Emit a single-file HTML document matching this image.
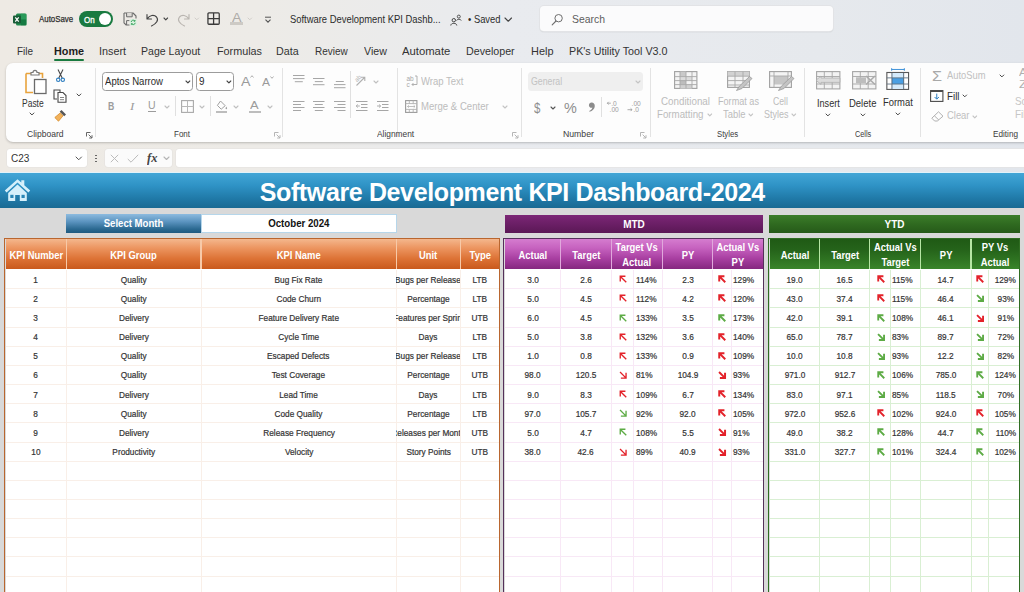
<!DOCTYPE html>
<html lang="en"><head><meta charset="utf-8"><title>Software Development KPI Dashboard</title>
<style>
html,body{margin:0;padding:0}
body{width:1024px;height:592px;overflow:hidden;position:relative;background:linear-gradient(90deg,#eeeae4 0%,#edebe7 25%,#e9ebef 50%,#e6e9ed 80%,#e2e6ec 100%);font-family:"Liberation Sans",sans-serif;}
.b{position:absolute;display:block;overflow:visible}
.t{position:absolute;white-space:nowrap;line-height:1;transform-origin:0 50%;display:block}
.h{display:block;text-align:center;color:#fff;font-weight:bold;white-space:nowrap}
.c{position:absolute;height:19.15px;line-height:20px;font-size:8.8px;color:#333;-webkit-text-stroke:0.2px #333;white-space:nowrap;display:flex;justify-content:center}
.c span{display:block;flex:none;transform:scaleX(0.94)}
.hs{transform:scaleX(0.94)}
.ttl{color:#fff;font-weight:bold;font-size:25px;text-align:center;white-space:nowrap;letter-spacing:-0.37px}
</style></head><body>
<div id="app">
<svg class="b" style="left:12.5px;top:12.5px;" width="14" height="13" viewBox="0 0 14 13"><rect x="3" y="0.5" width="10.5" height="12" rx="1.5" fill="#1e8a4c"/><rect x="8" y="0.8" width="5.3" height="5.8" fill="#2a9a5a"/><rect x="8" y="6.6" width="5.3" height="5.6" fill="#157a42"/><rect x="0" y="2.5" width="8" height="8" rx="1" fill="#185c37"/><path d="M2.3 4.3 L5.7 8.7 M5.7 4.3 L2.3 8.7" stroke="#fff" stroke-width="1.2"/></svg>
<span class="t" style="left:39.2px;top:15.4px;font-size:9.2px;color:#2e2e2e;transform:scaleX(0.857);-webkit-text-stroke:0.25px #2e2e2e;">AutoSave</span>
<div class="b" style="left:78.7px;top:11.4px;width:34.3px;height:16.0px;background:#197a40;border-radius:8px;"></div>
<span class="t" style="left:84.3px;top:15.5px;font-size:9px;color:#fff;transform:scaleX(0.891);-webkit-text-stroke:0.3px #fff;">On</span>
<div class="b" style="left:98.6px;top:13.4px;width:12.0px;height:12.0px;background:#fff;border-radius:6px;"></div>
<svg class="b" style="left:123.2px;top:12.0px;" width="14" height="14" viewBox="0 0 14 14"><path d="M1 1 H10 L13 4 V6.5 M6.5 13 H3.2 L1 10.8 V1" fill="none" stroke="#6b6b6b" stroke-width="1.1" stroke-linejoin="round"/><path d="M3.6 1 V4.8 H9.2 V1" fill="#dcdad6" stroke="#6b6b6b" stroke-width="1"/><path d="M3.6 13 V8.6 H6.5" fill="none" stroke="#6b6b6b" stroke-width="1"/><rect x="6.8" y="7" width="6.8" height="6.8" rx="1.2" fill="#d9f0df"/><path d="M8.2 10 a2 2 0 0 1 3.6 -1 M12 8 V9.2 H10.8 M12.2 10.8 a2 2 0 0 1 -3.6 1 M8.4 12.8 V11.6 H9.6" fill="none" stroke="#2e9e55" stroke-width="0.9"/></svg>
<svg class="b" style="left:145.0px;top:12.0px;" width="15" height="15" viewBox="0 0 15 15"><path d="M2 2.5 V7 H6.5 M2.3 6.7 C4.5 3.2 9 2.2 11.5 5 C14 8 11.5 11.5 6.5 14" fill="none" stroke="#444" stroke-width="1.15" stroke-linecap="round" stroke-linejoin="round"/></svg>
<svg class="b" style="left:163.4px;top:16.7px;" width="5.6" height="3.8" viewBox="0 0 5.6 3.8"><path d="M1 1 L2.8 2.8 L4.6 1" fill="none" stroke="#444" stroke-width="1.1" stroke-linecap="round" stroke-linejoin="round"/></svg>
<svg class="b" style="left:176.0px;top:12.0px;" width="15" height="15" viewBox="0 0 15 15"><path d="M13 2.5 V7 H8.5 M12.7 6.7 C10.5 3.2 6 2.2 3.5 5 C1 8 3.5 11.5 8.5 14" fill="none" stroke="#b9b5b0" stroke-width="1.15" stroke-linecap="round" stroke-linejoin="round"/></svg>
<svg class="b" style="left:194.2px;top:16.7px;" width="5.6" height="3.8" viewBox="0 0 5.6 3.8"><path d="M1 1 L2.8 2.8 L4.6 1" fill="none" stroke="#cfccc8" stroke-width="1" stroke-linecap="round" stroke-linejoin="round"/></svg>
<svg class="b" style="left:207.0px;top:12.4px;" width="13.2" height="13.2" viewBox="0 0 14 14"><rect x="1" y="1" width="12" height="12" rx="1" fill="none" stroke="#3a3a3a" stroke-width="1.35"/><path d="M7 1 V13 M1 7 H13" stroke="#3a3a3a" stroke-width="1.35"/></svg>
<span class="t" style="left:231.8px;top:11.5px;font-size:12.3px;color:#aeaba7;transform:scaleX(1.158);">A</span>
<div class="b" style="left:230.2px;top:22.0px;width:12.4px;height:2.7px;background:#cdcac5;"></div>
<svg class="b" style="left:247.2px;top:16.7px;" width="5.6" height="3.8" viewBox="0 0 5.6 3.8"><path d="M1 1 L2.8 2.8 L4.6 1" fill="none" stroke="#d0cdc9" stroke-width="1" stroke-linecap="round" stroke-linejoin="round"/></svg>
<svg class="b" style="left:264.0px;top:15.5px;" width="8" height="8" viewBox="0 0 8 8"><path d="M1 1.2 H7" stroke="#555" stroke-width="1"/><path d="M1.5 3.6 L4 6.2 L6.5 3.6" fill="none" stroke="#555" stroke-width="1.1"/></svg>
<span class="t" style="left:289.5px;top:15.1px;font-size:10.3px;color:#2b2b2b;transform:scaleX(0.913);">Software Development KPI Dashb...</span>
<svg class="b" style="left:450.0px;top:13.5px;" width="12" height="12" viewBox="0 0 12 12"><circle cx="3.8" cy="6.2" r="1.7" fill="none" stroke="#444" stroke-width="1"/><path d="M0.8 11.5 C0.8 8.6 6.8 8.6 6.8 11.5" fill="none" stroke="#444" stroke-width="1"/><circle cx="8.8" cy="2.6" r="1.5" fill="none" stroke="#444" stroke-width="0.9"/><path d="M6.6 6.6 C6.8 4.8 11 4.8 11.2 6.6" fill="none" stroke="#444" stroke-width="0.9"/></svg>
<span class="t" style="left:468.0px;top:15.1px;font-size:10.3px;color:#2b2b2b;transform:scaleX(0.911);">• Saved</span>
<svg class="b" style="left:504.4px;top:17.4px;" width="8.5" height="5.25" viewBox="0 0 8.5 5.25"><path d="M1 1 L4.25 4.25 L7.5 1" fill="none" stroke="#444" stroke-width="1.1" stroke-linecap="round" stroke-linejoin="round"/></svg>
<div class="b" style="left:539.5px;top:6.0px;width:293.5px;height:25.0px;background:#fbfbfc;border-radius:4px;box-shadow:0 0 0 1px #e2e3e6, 0 1px 1.5px rgba(0,0,0,.14);"></div>
<svg class="b" style="left:550.5px;top:12.5px;" width="13" height="13" viewBox="0 0 13 13"><circle cx="7.6" cy="5.2" r="3.7" fill="none" stroke="#6e6e6e" stroke-width="1"/><path d="M5 8 L1.2 11.8" stroke="#6e6e6e" stroke-width="1.1" stroke-linecap="round"/></svg>
<span class="t" style="left:572.0px;top:14.2px;font-size:11px;color:#5e5e5e;transform:scaleX(0.947);">Search</span>
<span class="t" style="left:17.0px;top:46.3px;font-size:11.3px;color:#333;transform:scaleX(0.879);">File</span>
<span class="t" style="left:54.0px;top:46.0px;font-size:11.5px;color:#1c1c1c;transform:scaleX(0.939);font-weight:bold;">Home</span>
<span class="t" style="left:98.5px;top:46.3px;font-size:11.3px;color:#333;transform:scaleX(0.959);">Insert</span>
<span class="t" style="left:141.3px;top:46.3px;font-size:11.3px;color:#333;transform:scaleX(0.933);">Page Layout</span>
<span class="t" style="left:216.5px;top:46.3px;font-size:11.3px;color:#333;transform:scaleX(0.956);">Formulas</span>
<span class="t" style="left:276.4px;top:46.3px;font-size:11.3px;color:#333;transform:scaleX(0.947);">Data</span>
<span class="t" style="left:315.0px;top:46.3px;font-size:11.3px;color:#333;transform:scaleX(0.880);">Review</span>
<span class="t" style="left:364.0px;top:46.3px;font-size:11.3px;color:#333;transform:scaleX(0.939);">View</span>
<span class="t" style="left:402.4px;top:46.3px;font-size:11.3px;color:#333;transform:scaleX(0.999);">Automate</span>
<span class="t" style="left:466.0px;top:46.3px;font-size:11.3px;color:#333;transform:scaleX(0.944);">Developer</span>
<span class="t" style="left:530.5px;top:46.3px;font-size:11.3px;color:#333;transform:scaleX(0.968);">Help</span>
<span class="t" style="left:568.5px;top:46.3px;font-size:11.3px;color:#333;transform:scaleX(0.950);">PK's Utility Tool V3.0</span>
<div class="b" style="left:54.0px;top:59.0px;width:30.0px;height:2.2px;background:#197a40;border-radius:1px;"></div>
<div class="b" style="left:6.3px;top:63.0px;width:1033.7px;height:79.3px;background:#fdfdfd;border-radius:7px;box-shadow:0 1px 2.5px rgba(0,0,0,.22);"></div>
<div class="b" style="left:94.8px;top:68.0px;width:1.0px;height:69.0px;background:#e3e3e3;"></div>
<div class="b" style="left:282.2px;top:68.0px;width:1.0px;height:69.0px;background:#e3e3e3;"></div>
<div class="b" style="left:396.5px;top:68.0px;width:1.0px;height:69.0px;background:#e3e3e3;"></div>
<div class="b" style="left:520.8px;top:68.0px;width:1.0px;height:69.0px;background:#e3e3e3;"></div>
<div class="b" style="left:649.8px;top:68.0px;width:1.0px;height:69.0px;background:#e3e3e3;"></div>
<div class="b" style="left:804.2px;top:68.0px;width:1.0px;height:69.0px;background:#e3e3e3;"></div>
<div class="b" style="left:920.2px;top:68.0px;width:1.0px;height:69.0px;background:#e3e3e3;"></div>
<svg class="b" style="left:22.5px;top:69.0px;" width="25" height="26" viewBox="0 0 25 26"><path d="M3 4.5 H8 M16 4.5 H19.5 V9 M10 23.5 H3 V4.5" fill="none" stroke="#e8a33d" stroke-width="1.6"/><path d="M8 6 V3.5 H10 C10 0.6 14 0.6 14 3.5 H16 V6 Z" fill="#fff" stroke="#7a7a7a" stroke-width="1.2"/><rect x="11.5" y="10.5" width="11.5" height="14" fill="#fff" stroke="#6a6a6a" stroke-width="1.3"/></svg>
<span class="t" style="left:21.6px;top:98.0px;font-size:10.5px;color:#333;transform:scaleX(0.808);">Paste</span>
<svg class="b" style="left:29.1px;top:112.2px;" width="5.9" height="3.95" viewBox="0 0 5.9 3.95"><path d="M1 1 L2.95 2.95 L4.9 1" fill="none" stroke="#444" stroke-width="1.0" stroke-linecap="round" stroke-linejoin="round"/></svg>
<svg class="b" style="left:55.5px;top:68.5px;" width="9" height="13.5" viewBox="0 0 9 13.5"><path d="M2 0.5 L6.2 9 M7 0.5 L2.8 9" stroke="#4a4a4a" stroke-width="1.1"/><circle cx="2.2" cy="10.8" r="1.7" fill="none" stroke="#2f7fc1" stroke-width="1.1"/><circle cx="6.8" cy="10.8" r="1.7" fill="none" stroke="#2f7fc1" stroke-width="1.1"/></svg>
<svg class="b" style="left:53.0px;top:88.5px;" width="14" height="14" viewBox="0 0 14 14"><path d="M4 10 H1 V1 H7 V3" fill="none" stroke="#484848" stroke-width="1.1"/><path d="M5 3.5 H10 L13 6.5 V13.2 H5 Z" fill="#fff" stroke="#484848" stroke-width="1.1"/><path d="M7 8.5 H11 M7 10.7 H11" stroke="#777" stroke-width="0.9"/></svg>
<svg class="b" style="left:75.8px;top:93.0px;" width="5.9" height="3.95" viewBox="0 0 5.9 3.95"><path d="M1 1 L2.95 2.95 L4.9 1" fill="none" stroke="#444" stroke-width="1.0" stroke-linecap="round" stroke-linejoin="round"/></svg>
<svg class="b" style="left:54.0px;top:108.5px;" width="13" height="13" viewBox="0 0 13 13"><path d="M7.5 1 L12 5.5 L10.2 7.3 L5.7 2.8 Z" fill="#555"/><path d="M6.2 4 L9 6.8 L4.5 12.2 L0.8 8.5 Z" fill="#f2b25c" stroke="#d48a2a" stroke-width="0.8"/></svg>
<span class="t" style="left:27.0px;top:130.0px;font-size:9.2px;color:#3b3b3b;transform:scaleX(0.927);">Clipboard</span>
<svg class="b" style="left:85.7px;top:131.5px;" width="7" height="7" viewBox="0 0 7 7"><path d="M0.5 4.5 V0.5 H4.5" fill="none" stroke="#666" stroke-width="1"/><path d="M2.6 2.6 L6 6 M6 3.2 V6 H3.2" fill="none" stroke="#666" stroke-width="1"/></svg>
<div class="b" style="left:102.3px;top:72.0px;width:91.1px;height:18.6px;background:#fff;border:1px solid #9c9c9c;border-radius:3.5px;box-sizing:border-box;"></div>
<span class="t" style="left:105.0px;top:76.9px;font-size:10.3px;color:#2b2b2b;transform:scaleX(0.930);">Aptos Narrow</span>
<svg class="b" style="left:185.3px;top:79.5px;" width="5.8" height="3.9" viewBox="0 0 5.8 3.9"><path d="M1 1 L2.9 2.9 L4.8 1" fill="none" stroke="#444" stroke-width="1.1" stroke-linecap="round" stroke-linejoin="round"/></svg>
<div class="b" style="left:196.0px;top:72.0px;width:38.3px;height:18.6px;background:#fff;border:1px solid #9c9c9c;border-radius:3.5px;box-sizing:border-box;"></div>
<span class="t" style="left:198.5px;top:76.9px;font-size:10.3px;color:#2b2b2b;transform:scaleX(0.960);">9</span>
<svg class="b" style="left:226.4px;top:79.5px;" width="5.8" height="3.9" viewBox="0 0 5.8 3.9"><path d="M1 1 L2.9 2.9 L4.8 1" fill="none" stroke="#444" stroke-width="1.1" stroke-linecap="round" stroke-linejoin="round"/></svg>
<span class="t" style="left:240.5px;top:74.9px;font-size:13.5px;color:#9a9a9a;transform:scaleX(1.055);">A</span>
<svg class="b" style="left:249.5px;top:75.0px;" width="4" height="3" viewBox="0 0 4 3"><path d="M0.5 2.5 L2 0.7 L3.5 2.5" fill="none" stroke="#9a9a9a" stroke-width="0.8"/></svg>
<span class="t" style="left:262.0px;top:76.5px;font-size:11.5px;color:#9a9a9a;transform:scaleX(1.043);">A</span>
<svg class="b" style="left:269.5px;top:75.5px;" width="4" height="3" viewBox="0 0 4 3"><path d="M0.5 0.5 L2 2.3 L3.5 0.5" fill="none" stroke="#9a9a9a" stroke-width="0.8"/></svg>
<span class="t" style="left:108.4px;top:102.0px;font-size:10px;color:#9c9c9c;transform:scaleX(0.872);font-weight:bold;">B</span>
<span class="t" style="left:129.8px;top:102.0px;font-size:10px;color:#9c9c9c;transform:scaleX(1.296);font-style:italic;font-family:'Liberation Serif',serif;">I</span>
<span class="t" style="left:148.0px;top:101.4px;font-size:10px;color:#9c9c9c;transform:scaleX(1.052);">U</span>
<div class="b" style="left:148.0px;top:111.4px;width:7.6px;height:1.0px;background:#9c9c9c;"></div>
<svg class="b" style="left:164.0px;top:104.8px;" width="6" height="4.0" viewBox="0 0 6 4.0"><path d="M1 1 L3.0 3.0 L5 1" fill="none" stroke="#c0c0c0" stroke-width="1.1" stroke-linecap="round" stroke-linejoin="round"/></svg>
<div class="b" style="left:175.1px;top:96.0px;width:1.0px;height:20.0px;background:#e0e0e0;"></div>
<svg class="b" style="left:180.5px;top:100.3px;" width="13" height="13" viewBox="0 0 13 13"><rect x="0.6" y="0.6" width="11.8" height="11.8" fill="none" stroke="#a8a8a8" stroke-width="1.1"/><path d="M6.5 0.6 V12.4 M0.6 6.5 H12.4" stroke="#b8b8b8" stroke-width="1"/></svg>
<svg class="b" style="left:198.8px;top:104.8px;" width="6" height="4.0" viewBox="0 0 6 4.0"><path d="M1 1 L3.0 3.0 L5 1" fill="none" stroke="#c0c0c0" stroke-width="1.1" stroke-linecap="round" stroke-linejoin="round"/></svg>
<div class="b" style="left:209.5px;top:96.0px;width:1.0px;height:20.0px;background:#e0e0e0;"></div>
<svg class="b" style="left:215.5px;top:99.5px;" width="12" height="11" viewBox="0 0 12 11"><path d="M4.5 1 L9.2 5.7 L5.2 9.2 L1.4 5.4 Z" fill="none" stroke="#a0a0a0" stroke-width="1"/><path d="M10.3 6.5 C11.5 8.2 11.3 9.3 10.3 9.3 C9.3 9.3 9.2 8.2 10.3 6.5Z" fill="#a0a0a0"/></svg>
<div class="b" style="left:215.5px;top:110.8px;width:11.8px;height:2.0px;background:#bdbdbd;"></div>
<svg class="b" style="left:233.0px;top:104.8px;" width="6" height="4.0" viewBox="0 0 6 4.0"><path d="M1 1 L3.0 3.0 L5 1" fill="none" stroke="#c0c0c0" stroke-width="1.1" stroke-linecap="round" stroke-linejoin="round"/></svg>
<span class="t" style="left:250.2px;top:100.3px;font-size:11px;color:#9c9c9c;transform:scaleX(1.172);">A</span>
<div class="b" style="left:248.5px;top:110.8px;width:12.3px;height:2.0px;background:#bdbdbd;"></div>
<svg class="b" style="left:266.5px;top:104.8px;" width="6" height="4.0" viewBox="0 0 6 4.0"><path d="M1 1 L3.0 3.0 L5 1" fill="none" stroke="#c0c0c0" stroke-width="1.1" stroke-linecap="round" stroke-linejoin="round"/></svg>
<span class="t" style="left:174.0px;top:130.0px;font-size:9.2px;color:#3b3b3b;transform:scaleX(0.869);">Font</span>
<svg class="b" style="left:273.5px;top:131.5px;" width="7" height="7" viewBox="0 0 7 7"><path d="M0.5 4.5 V0.5 H4.5" fill="none" stroke="#b5b5b5" stroke-width="1"/><path d="M2.6 2.6 L6 6 M6 3.2 V6 H3.2" fill="none" stroke="#b5b5b5" stroke-width="1"/></svg>
<svg class="b" style="left:292.5px;top:74.5px;" width="11.5" height="9.3" viewBox="0 0 11.5 9.3"><rect x="0.0" y="0.0" width="11.5" height="1" fill="#a6a6a6"/><rect x="0.0" y="3.1" width="11.5" height="1" fill="#a6a6a6"/><rect x="1.8" y="6.2" width="8" height="1" fill="#a6a6a6"/></svg>
<svg class="b" style="left:313.0px;top:77.5px;" width="11.5" height="9.3" viewBox="0 0 11.5 9.3"><rect x="0.0" y="0.0" width="11.5" height="1" fill="#a6a6a6"/><rect x="1.8" y="3.1" width="8" height="1" fill="#a6a6a6"/><rect x="0.0" y="6.2" width="11.5" height="1" fill="#a6a6a6"/></svg>
<svg class="b" style="left:333.5px;top:80.5px;" width="11.5" height="9.3" viewBox="0 0 11.5 9.3"><rect x="1.8" y="0.0" width="8" height="1" fill="#a6a6a6"/><rect x="0.0" y="3.1" width="11.5" height="1" fill="#a6a6a6"/><rect x="0.0" y="6.2" width="11.5" height="1" fill="#a6a6a6"/></svg>
<div class="b" style="left:350.2px;top:71.0px;width:1.0px;height:47.0px;background:#e0e0e0;"></div>
<svg class="b" style="left:355.0px;top:74.0px;" width="13" height="13" viewBox="0 0 13 13"><path d="M1.5 11.5 L9.5 3.5 M9.8 7 V3.2 H6" fill="none" stroke="#b0b0b0" stroke-width="1.1"/><text x="0" y="6.5" font-size="6" fill="#b0b0b0" font-family="Liberation Sans, sans-serif" transform="rotate(-45 3 5)">ab</text></svg>
<svg class="b" style="left:372.6px;top:79.5px;" width="6" height="4.0" viewBox="0 0 6 4.0"><path d="M1 1 L3.0 3.0 L5 1" fill="none" stroke="#c0c0c0" stroke-width="1.1" stroke-linecap="round" stroke-linejoin="round"/></svg>
<svg class="b" style="left:292.5px;top:101.0px;" width="11.5" height="12.0" viewBox="0 0 11.5 12.0"><rect x="0.0" y="0.0" width="11.5" height="1" fill="#a6a6a6"/><rect x="0.0" y="3.0" width="8" height="1" fill="#a6a6a6"/><rect x="0.0" y="6.0" width="11.5" height="1" fill="#a6a6a6"/><rect x="0.0" y="9.0" width="8" height="1" fill="#a6a6a6"/></svg>
<svg class="b" style="left:313.0px;top:101.0px;" width="11.5" height="12.0" viewBox="0 0 11.5 12.0"><rect x="0.0" y="0.0" width="11.5" height="1" fill="#a6a6a6"/><rect x="1.8" y="3.0" width="8" height="1" fill="#a6a6a6"/><rect x="0.0" y="6.0" width="11.5" height="1" fill="#a6a6a6"/><rect x="1.8" y="9.0" width="8" height="1" fill="#a6a6a6"/></svg>
<svg class="b" style="left:333.5px;top:101.0px;" width="11.5" height="12.0" viewBox="0 0 11.5 12.0"><rect x="0.0" y="0.0" width="11.5" height="1" fill="#a6a6a6"/><rect x="3.5" y="3.0" width="8" height="1" fill="#a6a6a6"/><rect x="0.0" y="6.0" width="11.5" height="1" fill="#a6a6a6"/><rect x="3.5" y="9.0" width="8" height="1" fill="#a6a6a6"/></svg>
<svg class="b" style="left:356.0px;top:101.0px;" width="11.5" height="10" viewBox="0 0 11.5 10"><rect x="0" y="0" width="11.5" height="1" fill="#a6a6a6"/><rect x="5" y="3" width="6.5" height="1" fill="#a6a6a6"/><rect x="5" y="6" width="6.5" height="1" fill="#a6a6a6"/><rect x="0" y="9" width="11.5" height="1" fill="#a6a6a6"/><path d="M0.3 5 H3.8 M1.8 3.5 L0.2 5 L1.8 6.5" fill="none" stroke="#a6a6a6" stroke-width="0.9"/></svg>
<svg class="b" style="left:376.6px;top:101.0px;" width="11.5" height="10" viewBox="0 0 11.5 10"><rect x="0" y="0" width="11.5" height="1" fill="#a6a6a6"/><rect x="5" y="3" width="6.5" height="1" fill="#a6a6a6"/><rect x="5" y="6" width="6.5" height="1" fill="#a6a6a6"/><rect x="0" y="9" width="11.5" height="1" fill="#a6a6a6"/><path d="M0 5 H3.5 M2 3.5 L3.7 5 L2 6.5" fill="none" stroke="#a6a6a6" stroke-width="0.9"/></svg>
<svg class="b" style="left:406.0px;top:74.5px;" width="12" height="13" viewBox="0 0 12 13"><text x="0.5" y="5.5" font-size="6.5" fill="#a8a8a8" font-family="Liberation Sans, sans-serif">ab</text><text x="0.5" y="12" font-size="6.5" fill="#a8a8a8" font-family="Liberation Sans, sans-serif">c</text><path d="M9 1 H11 V9.5 H6 M7.5 8 L6 9.5 L7.5 11" fill="none" stroke="#a8a8a8" stroke-width="0.9"/></svg>
<span class="t" style="left:421.0px;top:77.3px;font-size:10.3px;color:#bcbcbc;transform:scaleX(0.924);">Wrap Text</span>
<svg class="b" style="left:405.0px;top:100.0px;" width="12.5" height="13" viewBox="0 0 12.5 13"><rect x="0.6" y="0.6" width="11.3" height="11.8" fill="none" stroke="#9a9a9a" stroke-width="1.1"/><path d="M0.6 3.6 H11.9 M0.6 9.4 H11.9 M4.3 0.6 V3.6 M8.2 0.6 V3.6 M4.3 9.4 V12.4 M8.2 9.4 V12.4" stroke="#b0b0b0" stroke-width="0.9"/><path d="M2.5 6.5 H10 M3.8 5.3 L2.5 6.5 L3.8 7.7 M8.7 5.3 L10 6.5 L8.7 7.7" fill="none" stroke="#b0b0b0" stroke-width="0.8"/></svg>
<span class="t" style="left:421.0px;top:102.3px;font-size:10.3px;color:#bcbcbc;transform:scaleX(0.931);">Merge &amp; Center</span>
<svg class="b" style="left:501.8px;top:105.0px;" width="6" height="4.0" viewBox="0 0 6 4.0"><path d="M1 1 L3.0 3.0 L5 1" fill="none" stroke="#c4c4c4" stroke-width="1.1" stroke-linecap="round" stroke-linejoin="round"/></svg>
<span class="t" style="left:376.5px;top:130.0px;font-size:9.2px;color:#3b3b3b;transform:scaleX(0.909);">Alignment</span>
<svg class="b" style="left:512.0px;top:131.5px;" width="7" height="7" viewBox="0 0 7 7"><path d="M0.5 4.5 V0.5 H4.5" fill="none" stroke="#b5b5b5" stroke-width="1"/><path d="M2.6 2.6 L6 6 M6 3.2 V6 H3.2" fill="none" stroke="#b5b5b5" stroke-width="1"/></svg>
<div class="b" style="left:528.0px;top:72.3px;width:115.3px;height:18.5px;background:#efefef;border-radius:3.5px;"></div>
<span class="t" style="left:530.5px;top:76.9px;font-size:10.3px;color:#c2c2c2;transform:scaleX(0.851);">General</span>
<svg class="b" style="left:635.0px;top:79.5px;" width="6" height="4.0" viewBox="0 0 6 4.0"><path d="M1 1 L3.0 3.0 L5 1" fill="none" stroke="#c4c4c4" stroke-width="1.1" stroke-linecap="round" stroke-linejoin="round"/></svg>
<span class="t" style="left:534.2px;top:100.0px;font-size:15px;color:#8e8e8e;transform:scaleX(0.767);">$</span>
<svg class="b" style="left:550.0px;top:105.5px;" width="6" height="4.0" viewBox="0 0 6 4.0"><path d="M1 1 L3.0 3.0 L5 1" fill="none" stroke="#555" stroke-width="1.1" stroke-linecap="round" stroke-linejoin="round"/></svg>
<span class="t" style="left:564.0px;top:100.5px;font-size:14px;color:#8e8e8e;transform:scaleX(1.028);">%</span>
<svg class="b" style="left:587.5px;top:102.0px;" width="8" height="11" viewBox="0 0 8 11"><path d="M3.6 0.4 C5.6 0.4 6.8 1.8 6.8 3.9 C6.8 6.6 4.6 8.8 1.6 9.8 L1.2 9 C3 8.2 4.2 7 4.4 5.6 C4.2 5.7 3.9 5.8 3.5 5.8 C2 5.8 0.9 4.7 0.9 3.2 C0.9 1.6 2.1 0.4 3.6 0.4 Z" fill="#8c8c8c"/></svg>
<div class="b" style="left:601.2px;top:97.0px;width:1.0px;height:20.0px;background:#e0e0e0;"></div>
<svg class="b" style="left:606.7px;top:100.3px;" width="15" height="13" viewBox="0 0 15 13"><text x="6" y="5.6" font-family="Liberation Sans, sans-serif" font-size="6.6" fill="#9c9c9c">0</text><text x="4.3" y="5.6" font-family="Liberation Sans, sans-serif" font-size="6.6" fill="#9c9c9c">.</text><text x="2.6" y="12" font-family="Liberation Sans, sans-serif" font-size="6.6" fill="#9c9c9c">.00</text><path d="M0.3 3.2 H3.8 M1.7 1.8 L0.3 3.2 L1.7 4.6" fill="none" stroke="#9c9c9c" stroke-width="0.85"/></svg>
<svg class="b" style="left:626.6px;top:100.3px;" width="15" height="13" viewBox="0 0 15 13"><text x="4.6" y="5.6" font-family="Liberation Sans, sans-serif" font-size="6.6" fill="#9c9c9c">.00</text><text x="6.4" y="12" font-family="Liberation Sans, sans-serif" font-size="6.6" fill="#9c9c9c">.0</text><path d="M0.5 9.7 H5 M3.6 8.3 L5 9.7 L3.6 11.1" fill="none" stroke="#9c9c9c" stroke-width="0.85"/></svg>
<span class="t" style="left:563.0px;top:130.0px;font-size:9.2px;color:#3b3b3b;transform:scaleX(0.947);">Number</span>
<svg class="b" style="left:640.0px;top:131.5px;" width="7" height="7" viewBox="0 0 7 7"><path d="M0.5 4.5 V0.5 H4.5" fill="none" stroke="#b5b5b5" stroke-width="1"/><path d="M2.6 2.6 L6 6 M6 3.2 V6 H3.2" fill="none" stroke="#b5b5b5" stroke-width="1"/></svg>
<svg class="b" style="left:674.0px;top:71.0px;" width="26.5" height="21" viewBox="0 0 26.5 21"><rect x="0.6" y="0.6" width="22.3" height="16.8" fill="#f4f4f4" stroke="#a0a0a0" stroke-width="1.1"/><rect x="6" y="0.6" width="6" height="5" fill="#c9c9c9"/><rect x="6" y="5.6" width="12" height="4" fill="#dcdcdc"/><rect x="6" y="9.6" width="6" height="4" fill="#bdbdbd"/><rect x="6" y="13.6" width="12" height="4" fill="#d0d0d0"/><path d="M6 0.6 V17.4 M12 0.6 V17.4 M18 0.6 V17.4 M0.6 5.6 H22.9 M0.6 9.6 H22.9 M0.6 13.6 H22.9" stroke="#a8a8a8" stroke-width="0.9" fill="none"/></svg>
<svg class="b" style="left:727.0px;top:71.0px;" width="26" height="20" viewBox="0 0 26 20"><rect x="0.6" y="0.6" width="21.8" height="15.8" fill="#f4f4f4" stroke="#a0a0a0" stroke-width="1.1"/><rect x="0.6" y="0.6" width="21.8" height="4.5" fill="#d2d2d2"/><path d="M8 0.6 V16.4 M16 0.6 V16.4 M0.6 5.2 H22.4 M0.6 9.6 H22.4 M0.6 14 H22.4" stroke="#a8a8a8" stroke-width="0.9" fill="none"/><path d="M22.5 5.5 L25 7.5 L15 17.5 L9.5 19.5 L12.5 15 Z" fill="#c4c4c4" stroke="#9a9a9a" stroke-width="0.8"/></svg>
<svg class="b" style="left:769.0px;top:71.0px;" width="26" height="20" viewBox="0 0 26 20"><rect x="0.6" y="0.6" width="21.8" height="15.8" fill="#f4f4f4" stroke="#a0a0a0" stroke-width="1.1"/><rect x="5" y="5" width="14" height="8.5" fill="#c6c6c6"/><path d="M0.6 5 H22.4 M5 0.6 V16.4 M19 0.6 V13" stroke="#a8a8a8" stroke-width="0.9" fill="none"/><path d="M22.5 5.5 L25 7.5 L15 17.5 L9.5 19.5 L12.5 15 Z" fill="#c4c4c4" stroke="#9a9a9a" stroke-width="0.8"/></svg>
<span class="t" style="left:661.0px;top:96.9px;font-size:10.3px;color:#bcbcbc;transform:scaleX(0.951);">Conditional</span>
<span class="t" style="left:657.0px;top:109.5px;font-size:10.3px;color:#bcbcbc;transform:scaleX(0.945);">Formatting</span>
<svg class="b" style="left:706.7px;top:112.7px;" width="5.6" height="3.8" viewBox="0 0 5.6 3.8"><path d="M1 1 L2.8 2.8 L4.6 1" fill="none" stroke="#c4c4c4" stroke-width="1.1" stroke-linecap="round" stroke-linejoin="round"/></svg>
<span class="t" style="left:718.0px;top:96.9px;font-size:10.3px;color:#bcbcbc;transform:scaleX(0.884);">Format as</span>
<span class="t" style="left:723.0px;top:109.5px;font-size:10.3px;color:#bcbcbc;transform:scaleX(0.914);">Table</span>
<svg class="b" style="left:748.2px;top:112.7px;" width="5.6" height="3.8" viewBox="0 0 5.6 3.8"><path d="M1 1 L2.8 2.8 L4.6 1" fill="none" stroke="#c4c4c4" stroke-width="1.1" stroke-linecap="round" stroke-linejoin="round"/></svg>
<span class="t" style="left:773.0px;top:96.9px;font-size:10.3px;color:#bcbcbc;transform:scaleX(0.845);">Cell</span>
<span class="t" style="left:764.0px;top:109.5px;font-size:10.3px;color:#bcbcbc;transform:scaleX(0.873);">Styles</span>
<svg class="b" style="left:790.7px;top:112.7px;" width="5.6" height="3.8" viewBox="0 0 5.6 3.8"><path d="M1 1 L2.8 2.8 L4.6 1" fill="none" stroke="#c4c4c4" stroke-width="1.1" stroke-linecap="round" stroke-linejoin="round"/></svg>
<span class="t" style="left:716.6px;top:130.0px;font-size:9.2px;color:#3b3b3b;transform:scaleX(0.842);">Styles</span>
<svg class="b" style="left:816.3px;top:71.3px;" width="24.5" height="18.5" viewBox="0 0 24.5 18.5"><rect x="0.6" y="0.6" width="23.3" height="17.3" fill="#f3f3f3" stroke="#a6a6a6" stroke-width="1.1"/><path d="M8.3 0.6 V17.9 M16.2 0.6 V17.9 M0.6 5.5 H23.9 M0.6 13 H23.9" stroke="#a6a6a6" stroke-width="0.9"/><path d="M0 9.2 L5 5 V7 H23.9 V11.4 H5 V13.4 Z" fill="#dcdcdc" stroke="#a8a8a8" stroke-width="0.7"/></svg>
<svg class="b" style="left:851.5px;top:71.3px;" width="24.5" height="18.5" viewBox="0 0 24.5 18.5"><rect x="0.6" y="0.6" width="23.3" height="17.3" fill="#f3f3f3" stroke="#a6a6a6" stroke-width="1.1"/><path d="M8.3 0.6 V17.9 M16.2 0.6 V17.9 M0.6 5.5 H23.9 M0.6 13 H23.9" stroke="#a6a6a6" stroke-width="0.9"/><rect x="4" y="6.3" width="10" height="6" fill="#bdbdbd"/><path d="M14 5 L23 13.5 M23 5 L14 13.5" stroke="#ababab" stroke-width="1.6"/></svg>
<svg class="b" style="left:886.0px;top:68.0px;" width="24" height="22" viewBox="0 -0.5 24 22.5"><path d="M5.5 1 H18.5 M5.5 -0.3 V2.3 M18.5 -0.3 V2.3" stroke="#3a8fd8" stroke-width="1"/><rect x="0.6" y="4.1" width="22.2" height="17.3" fill="#fff" stroke="#5a5a5a" stroke-width="1.15"/><rect x="5.8" y="4.6" width="12" height="16.3" fill="#d4eafb"/><rect x="5.8" y="9.6" width="12" height="6.3" fill="#4a9fe3"/><path d="M5.8 4.1 V21.4 M17.8 4.1 V21.4" stroke="#4f5f6f" stroke-width="0.9"/><path d="M0.6 9.6 H22.8 M0.6 15.9 H22.8" stroke="#5f6f7f" stroke-width="0.9"/></svg>
<span class="t" style="left:817.0px;top:98.2px;font-size:10.5px;color:#2f2f2f;transform:scaleX(0.868);">Insert</span>
<svg class="b" style="left:825.4px;top:112.8px;" width="5.8" height="3.9" viewBox="0 0 5.8 3.9"><path d="M1 1 L2.9 2.9 L4.8 1" fill="none" stroke="#444" stroke-width="1.0" stroke-linecap="round" stroke-linejoin="round"/></svg>
<span class="t" style="left:849.4px;top:98.2px;font-size:10.5px;color:#2f2f2f;transform:scaleX(0.903);">Delete</span>
<svg class="b" style="left:859.8px;top:112.8px;" width="5.8" height="3.9" viewBox="0 0 5.8 3.9"><path d="M1 1 L2.9 2.9 L4.8 1" fill="none" stroke="#444" stroke-width="1.0" stroke-linecap="round" stroke-linejoin="round"/></svg>
<span class="t" style="left:882.5px;top:97.2px;font-size:10.5px;color:#2f2f2f;transform:scaleX(0.896);">Format</span>
<svg class="b" style="left:894.5px;top:111.8px;" width="5.8" height="3.9" viewBox="0 0 5.8 3.9"><path d="M1 1 L2.9 2.9 L4.8 1" fill="none" stroke="#444" stroke-width="1.0" stroke-linecap="round" stroke-linejoin="round"/></svg>
<span class="t" style="left:854.7px;top:130.3px;font-size:9.2px;color:#3b3b3b;transform:scaleX(0.797);">Cells</span>
<span class="t" style="left:931.5px;top:69.3px;font-size:14px;color:#a8a8a8;transform:scaleX(1.155);">Σ</span>
<span class="t" style="left:946.5px;top:70.9px;font-size:10.3px;color:#c0c0c0;transform:scaleX(0.909);">AutoSum</span>
<svg class="b" style="left:999.1px;top:73.5px;" width="5.8" height="3.9" viewBox="0 0 5.8 3.9"><path d="M1 1 L2.9 2.9 L4.8 1" fill="none" stroke="#444" stroke-width="1.0" stroke-linecap="round" stroke-linejoin="round"/></svg>
<svg class="b" style="left:930.0px;top:89.5px;" width="13.5" height="12" viewBox="0 0 13.5 12"><rect x="0.6" y="0.6" width="12.3" height="10.8" fill="#fff" stroke="#4a4a4a" stroke-width="1.1"/><path d="M0.6 1.2 H12.9" stroke="#4a4a4a" stroke-width="1.6"/><path d="M6.75 3.6 V9 M4.6 7 L6.75 9.2 L8.9 7" fill="none" stroke="#2f7fc1" stroke-width="1"/></svg>
<span class="t" style="left:946.5px;top:90.6px;font-size:10.5px;color:#2f2f2f;transform:scaleX(0.932);">Fill</span>
<svg class="b" style="left:961.7px;top:93.9px;" width="5.6" height="3.8" viewBox="0 0 5.6 3.8"><path d="M1 1 L2.8 2.8 L4.6 1" fill="none" stroke="#444" stroke-width="1.0" stroke-linecap="round" stroke-linejoin="round"/></svg>
<svg class="b" style="left:930.5px;top:110.5px;" width="13" height="11" viewBox="0 0 13 11"><path d="M7.5 0.8 L12 5.2 L6.3 10 H3.6 L0.8 7.2 Z M3.4 4.8 L7.8 9" fill="none" stroke="#b0b0b0" stroke-width="1"/></svg>
<span class="t" style="left:946.5px;top:111.3px;font-size:10.3px;color:#c0c0c0;transform:scaleX(0.914);">Clear</span>
<svg class="b" style="left:971.7px;top:114.5px;" width="5.6" height="3.8" viewBox="0 0 5.6 3.8"><path d="M1 1 L2.8 2.8 L4.6 1" fill="none" stroke="#c4c4c4" stroke-width="1.1" stroke-linecap="round" stroke-linejoin="round"/></svg>
<span class="t" style="left:993.4px;top:130.3px;font-size:9.2px;color:#3b3b3b;transform:scaleX(0.892);">Editing</span>
<span class="t" style="left:1019.0px;top:66.9px;font-size:11px;color:#b0b0b0;transform:scaleX(1.090);">A</span>
<span class="t" style="left:1019.0px;top:78.9px;font-size:11px;color:#b0b0b0;transform:scaleX(1.191);">Z</span>
<span class="t" style="left:1015.0px;top:96.9px;font-size:10.3px;color:#c6c6c6;transform:scaleX(0.953);">Sort</span>
<span class="t" style="left:1015.0px;top:109.5px;font-size:10.3px;color:#c6c6c6;transform:scaleX(0.961);">Filter</span>
<div class="b" style="left:7.4px;top:149.3px;width:79.8px;height:17.7px;background:#fff;border-radius:3px;box-shadow:0 0 0 0.6px #e4e2df;"></div>
<span class="t" style="left:11.3px;top:153.8px;font-size:10px;color:#333;transform:scaleX(1.003);">C23</span>
<svg class="b" style="left:74.8px;top:156.1px;" width="7.5" height="4.75" viewBox="0 0 7.5 4.75"><path d="M1 1 L3.75 3.75 L6.5 1" fill="none" stroke="#555" stroke-width="1.0" stroke-linecap="round" stroke-linejoin="round"/></svg>
<div class="b" style="left:95.2px;top:154.5px;width:1.4px;height:1.4px;background:#555;border-radius:1px;"></div>
<div class="b" style="left:95.2px;top:157.7px;width:1.4px;height:1.4px;background:#555;border-radius:1px;"></div>
<div class="b" style="left:95.2px;top:160.9px;width:1.4px;height:1.4px;background:#555;border-radius:1px;"></div>
<div class="b" style="left:105.0px;top:149.3px;width:66.5px;height:17.7px;background:#fbfbfb;border-radius:3px;box-shadow:0 0 0 0.6px #e4e2df;"></div>
<svg class="b" style="left:110.0px;top:154.0px;" width="9" height="9" viewBox="0 0 9 9"><path d="M0.8 0.8 L8.2 8.2 M8.2 0.8 L0.8 8.2" stroke="#bcbcbc" stroke-width="1"/></svg>
<svg class="b" style="left:127.0px;top:154.0px;" width="12" height="9" viewBox="0 0 12 9"><path d="M0.8 5 L4 8.2 L11.2 0.8" fill="none" stroke="#bcbcbc" stroke-width="1"/></svg>
<span class="t" style="left:146.6px;top:152.7px;font-size:11.5px;color:#444;transform:scaleX(1.085);font-weight:bold;font-style:italic;font-family:'Liberation Serif',serif;">fx</span>
<svg class="b" style="left:163.0px;top:156.2px;" width="7" height="4.5" viewBox="0 0 7 4.5"><path d="M1 1 L3.5 3.5 L6 1" fill="none" stroke="#b5b5b5" stroke-width="1.1" stroke-linecap="round" stroke-linejoin="round"/></svg>
<div class="b" style="left:176.0px;top:149.3px;width:864.0px;height:17.7px;background:#fff;border-radius:3px;box-shadow:0 0 0 0.6px #e4e2df;"></div>
<div class="b" style="left:0.0px;top:171.8px;width:1024.0px;height:2.2px;background:#e2f2f9;"></div>
<div class="b" style="left:0.0px;top:173.6px;width:1024.0px;height:418.4px;background:#d9d9d9;"></div>
<div class="b" style="left:0.0px;top:173.4px;width:1024.0px;height:35.0px;background:linear-gradient(180deg,#43a6d6 0%,#2f93c6 35%,#1f78a6 75%,#1a6a93 100%);"></div>
<div class="b ttl" style="left:0.3px;top:173.6px;width:1024px;height:35px;line-height:36px;">Software Development KPI Dashboard-2024</div>
<svg class="b" style="left:4px;top:177.5px" width="27" height="24" viewBox="0 0 27 24"><path d="M13.5 1.2 L0.8 12.6 L2.6 14.4 L13.5 4.6 L24.4 14.4 L26.2 12.6 L20.3 7.3 V2.2 H17.3 V4.6 Z" fill="#d6f0fb"/><path d="M13.5 6.6 L4.2 15 V23 H11.2 V17 H15.8 V23 H22.8 V15 Z" fill="#d6f0fb"/><rect x="6.3" y="16.8" width="3.2" height="3.2" fill="#2a86b6"/><rect x="17.5" y="16.8" width="3.2" height="3.2" fill="#2a86b6"/></svg>
<div class="b" style="left:66.0px;top:214.2px;width:135.0px;height:19.2px;background:linear-gradient(180deg,#8dbbdf 0%,#5b94c0 40%,#2a6890 80%,#1f5a80 100%);"><span class="h hs" style="font-size:10.2px;line-height:20.2px;">Select Month</span></div>
<div class="b" style="left:201.0px;top:214.2px;width:195.7px;height:19.2px;background:#fff;border:1px solid #b6d6ea;box-sizing:border-box;"><span class="h hs" style="font-size:10.3px;line-height:18.2px;color:#111;">October 2024</span></div>
<div class="b" style="left:5.5px;top:239.0px;width:493.5px;height:361.0px;background:#fff;"></div>
<div class="b" style="left:5.5px;top:288.2px;width:493.5px;height:1.0px;background:#f9efe8;"></div>
<div class="b" style="left:5.5px;top:307.4px;width:493.5px;height:1.0px;background:#f9efe8;"></div>
<div class="b" style="left:5.5px;top:326.6px;width:493.5px;height:1.0px;background:#f9efe8;"></div>
<div class="b" style="left:5.5px;top:345.7px;width:493.5px;height:1.0px;background:#f9efe8;"></div>
<div class="b" style="left:5.5px;top:364.9px;width:493.5px;height:1.0px;background:#f9efe8;"></div>
<div class="b" style="left:5.5px;top:384.0px;width:493.5px;height:1.0px;background:#f9efe8;"></div>
<div class="b" style="left:5.5px;top:403.1px;width:493.5px;height:1.0px;background:#f9efe8;"></div>
<div class="b" style="left:5.5px;top:422.3px;width:493.5px;height:1.0px;background:#f9efe8;"></div>
<div class="b" style="left:5.5px;top:441.5px;width:493.5px;height:1.0px;background:#f9efe8;"></div>
<div class="b" style="left:5.5px;top:460.6px;width:493.5px;height:1.0px;background:#f9efe8;"></div>
<div class="b" style="left:5.5px;top:479.8px;width:493.5px;height:1.0px;background:#f9efe8;"></div>
<div class="b" style="left:5.5px;top:498.9px;width:493.5px;height:1.0px;background:#f9efe8;"></div>
<div class="b" style="left:5.5px;top:518.0px;width:493.5px;height:1.0px;background:#f9efe8;"></div>
<div class="b" style="left:5.5px;top:537.2px;width:493.5px;height:1.0px;background:#f9efe8;"></div>
<div class="b" style="left:5.5px;top:556.4px;width:493.5px;height:1.0px;background:#f9efe8;"></div>
<div class="b" style="left:5.5px;top:575.5px;width:493.5px;height:1.0px;background:#f9efe8;"></div>
<div class="b" style="left:5.5px;top:594.6px;width:493.5px;height:1.0px;background:#f9efe8;"></div>
<div class="b" style="left:65.7px;top:269.6px;width:1.0px;height:330.4px;background:#f9efe8;"></div>
<div class="b" style="left:200.5px;top:269.6px;width:1.0px;height:330.4px;background:#f9efe8;"></div>
<div class="b" style="left:395.9px;top:269.6px;width:1.0px;height:330.4px;background:#f9efe8;"></div>
<div class="b" style="left:460.0px;top:269.6px;width:1.0px;height:330.4px;background:#f9efe8;"></div>
<div class="b" style="left:5.5px;top:239.0px;width:493.5px;height:29.7px;background:linear-gradient(180deg,#f4b78d 0%,#ec9560 30%,#dd7336 65%,#c9591c 100%);"></div>
<div class="b" style="left:65.6px;top:239.0px;width:1.2px;height:29.7px;background:#f7c9a8;"></div>
<div class="b" style="left:200.4px;top:239.0px;width:1.2px;height:29.7px;background:#f7c9a8;"></div>
<div class="b" style="left:395.8px;top:239.0px;width:1.2px;height:29.7px;background:#f7c9a8;"></div>
<div class="b" style="left:459.9px;top:239.0px;width:1.2px;height:29.7px;background:#f7c9a8;"></div>
<div class="b" style="left:5.5px;top:239.0px;width:60.7px;height:30.6px;"><span class="h hs" style="font-size:10px;line-height:33.4px;">KPI Number</span></div>
<div class="b" style="left:66.2px;top:239.0px;width:134.8px;height:30.6px;"><span class="h hs" style="font-size:10px;line-height:33.4px;">KPI Group</span></div>
<div class="b" style="left:201.0px;top:239.0px;width:195.4px;height:30.6px;"><span class="h hs" style="font-size:10px;line-height:33.4px;">KPI Name</span></div>
<div class="b" style="left:396.4px;top:239.0px;width:64.1px;height:30.6px;"><span class="h hs" style="font-size:10px;line-height:33.4px;">Unit</span></div>
<div class="b" style="left:460.5px;top:239.0px;width:38.5px;height:30.6px;"><span class="h hs" style="font-size:10px;line-height:33.4px;">Type</span></div>
<div class="b" style="left:3.9px;top:237.8px;width:496.5px;height:362.2px;box-sizing:border-box;border-style:solid;border-color:#b9662f;border-width:1.2px 1.4px 0 1.6px;"></div>
<div class="c" style="left:5.5px;top:269.6px;width:60.7px;"><span>1</span></div>
<div class="c" style="left:66.2px;top:269.6px;width:134.8px;"><span>Quality</span></div>
<div class="c" style="left:201.0px;top:269.6px;width:195.4px;"><span>Bug Fix Rate</span></div>
<div class="c" style="left:396.4px;top:269.6px;width:64.1px;overflow:hidden;"><span>Bugs per Release</span></div>
<div class="c" style="left:460.5px;top:269.6px;width:38.5px;"><span>LTB</span></div>
<div class="c" style="left:5.5px;top:288.8px;width:60.7px;"><span>2</span></div>
<div class="c" style="left:66.2px;top:288.8px;width:134.8px;"><span>Quality</span></div>
<div class="c" style="left:201.0px;top:288.8px;width:195.4px;"><span>Code Churn</span></div>
<div class="c" style="left:396.4px;top:288.8px;width:64.1px;overflow:hidden;"><span>Percentage</span></div>
<div class="c" style="left:460.5px;top:288.8px;width:38.5px;"><span>LTB</span></div>
<div class="c" style="left:5.5px;top:307.9px;width:60.7px;"><span>3</span></div>
<div class="c" style="left:66.2px;top:307.9px;width:134.8px;"><span>Delivery</span></div>
<div class="c" style="left:201.0px;top:307.9px;width:195.4px;"><span>Feature Delivery Rate</span></div>
<div class="c" style="left:396.4px;top:307.9px;width:64.1px;overflow:hidden;"><span>Features per Sprint</span></div>
<div class="c" style="left:460.5px;top:307.9px;width:38.5px;"><span>UTB</span></div>
<div class="c" style="left:5.5px;top:327.1px;width:60.7px;"><span>4</span></div>
<div class="c" style="left:66.2px;top:327.1px;width:134.8px;"><span>Delivery</span></div>
<div class="c" style="left:201.0px;top:327.1px;width:195.4px;"><span>Cycle Time</span></div>
<div class="c" style="left:396.4px;top:327.1px;width:64.1px;overflow:hidden;"><span>Days</span></div>
<div class="c" style="left:460.5px;top:327.1px;width:38.5px;"><span>LTB</span></div>
<div class="c" style="left:5.5px;top:346.2px;width:60.7px;"><span>5</span></div>
<div class="c" style="left:66.2px;top:346.2px;width:134.8px;"><span>Quality</span></div>
<div class="c" style="left:201.0px;top:346.2px;width:195.4px;"><span>Escaped Defects</span></div>
<div class="c" style="left:396.4px;top:346.2px;width:64.1px;overflow:hidden;"><span>Bugs per Release</span></div>
<div class="c" style="left:460.5px;top:346.2px;width:38.5px;"><span>LTB</span></div>
<div class="c" style="left:5.5px;top:365.4px;width:60.7px;"><span>6</span></div>
<div class="c" style="left:66.2px;top:365.4px;width:134.8px;"><span>Quality</span></div>
<div class="c" style="left:201.0px;top:365.4px;width:195.4px;"><span>Test Coverage</span></div>
<div class="c" style="left:396.4px;top:365.4px;width:64.1px;overflow:hidden;"><span>Percentage</span></div>
<div class="c" style="left:460.5px;top:365.4px;width:38.5px;"><span>UTB</span></div>
<div class="c" style="left:5.5px;top:384.5px;width:60.7px;"><span>7</span></div>
<div class="c" style="left:66.2px;top:384.5px;width:134.8px;"><span>Delivery</span></div>
<div class="c" style="left:201.0px;top:384.5px;width:195.4px;"><span>Lead Time</span></div>
<div class="c" style="left:396.4px;top:384.5px;width:64.1px;overflow:hidden;"><span>Days</span></div>
<div class="c" style="left:460.5px;top:384.5px;width:38.5px;"><span>LTB</span></div>
<div class="c" style="left:5.5px;top:403.6px;width:60.7px;"><span>8</span></div>
<div class="c" style="left:66.2px;top:403.6px;width:134.8px;"><span>Quality</span></div>
<div class="c" style="left:201.0px;top:403.6px;width:195.4px;"><span>Code Quality</span></div>
<div class="c" style="left:396.4px;top:403.6px;width:64.1px;overflow:hidden;"><span>Percentage</span></div>
<div class="c" style="left:460.5px;top:403.6px;width:38.5px;"><span>LTB</span></div>
<div class="c" style="left:5.5px;top:422.8px;width:60.7px;"><span>9</span></div>
<div class="c" style="left:66.2px;top:422.8px;width:134.8px;"><span>Delivery</span></div>
<div class="c" style="left:201.0px;top:422.8px;width:195.4px;"><span>Release Frequency</span></div>
<div class="c" style="left:396.4px;top:422.8px;width:64.1px;overflow:hidden;"><span>Releases per Month</span></div>
<div class="c" style="left:460.5px;top:422.8px;width:38.5px;"><span>UTB</span></div>
<div class="c" style="left:5.5px;top:442.0px;width:60.7px;"><span>10</span></div>
<div class="c" style="left:66.2px;top:442.0px;width:134.8px;"><span>Productivity</span></div>
<div class="c" style="left:201.0px;top:442.0px;width:195.4px;"><span>Velocity</span></div>
<div class="c" style="left:396.4px;top:442.0px;width:64.1px;overflow:hidden;"><span>Story Points</span></div>
<div class="c" style="left:460.5px;top:442.0px;width:38.5px;"><span>UTB</span></div>
<div class="b" style="left:505.0px;top:214.8px;width:258.0px;height:18.3px;background:linear-gradient(180deg,#7c2776 0%,#6b1f66 50%,#5a1855 100%);"><span class="h hs" style="font-size:10.6px;line-height:19.3px;">MTD</span></div>
<div class="b" style="left:505.0px;top:239.0px;width:257.5px;height:361.0px;background:#fff;"></div>
<div class="b" style="left:505.0px;top:288.2px;width:257.5px;height:1.0px;background:#f8e8f6;"></div>
<div class="b" style="left:505.0px;top:307.4px;width:257.5px;height:1.0px;background:#f8e8f6;"></div>
<div class="b" style="left:505.0px;top:326.6px;width:257.5px;height:1.0px;background:#f8e8f6;"></div>
<div class="b" style="left:505.0px;top:345.7px;width:257.5px;height:1.0px;background:#f8e8f6;"></div>
<div class="b" style="left:505.0px;top:364.9px;width:257.5px;height:1.0px;background:#f8e8f6;"></div>
<div class="b" style="left:505.0px;top:384.0px;width:257.5px;height:1.0px;background:#f8e8f6;"></div>
<div class="b" style="left:505.0px;top:403.1px;width:257.5px;height:1.0px;background:#f8e8f6;"></div>
<div class="b" style="left:505.0px;top:422.3px;width:257.5px;height:1.0px;background:#f8e8f6;"></div>
<div class="b" style="left:505.0px;top:441.5px;width:257.5px;height:1.0px;background:#f8e8f6;"></div>
<div class="b" style="left:505.0px;top:460.6px;width:257.5px;height:1.0px;background:#f8e8f6;"></div>
<div class="b" style="left:505.0px;top:479.8px;width:257.5px;height:1.0px;background:#f8e8f6;"></div>
<div class="b" style="left:505.0px;top:498.9px;width:257.5px;height:1.0px;background:#f8e8f6;"></div>
<div class="b" style="left:505.0px;top:518.0px;width:257.5px;height:1.0px;background:#f8e8f6;"></div>
<div class="b" style="left:505.0px;top:537.2px;width:257.5px;height:1.0px;background:#f8e8f6;"></div>
<div class="b" style="left:505.0px;top:556.4px;width:257.5px;height:1.0px;background:#f8e8f6;"></div>
<div class="b" style="left:505.0px;top:575.5px;width:257.5px;height:1.0px;background:#f8e8f6;"></div>
<div class="b" style="left:505.0px;top:594.6px;width:257.5px;height:1.0px;background:#f8e8f6;"></div>
<div class="b" style="left:560.2px;top:269.6px;width:1.0px;height:330.4px;background:#f8e8f6;"></div>
<div class="b" style="left:610.8px;top:269.6px;width:1.0px;height:330.4px;background:#f8e8f6;"></div>
<div class="b" style="left:662.2px;top:269.6px;width:1.0px;height:330.4px;background:#f8e8f6;"></div>
<div class="b" style="left:712.2px;top:269.6px;width:1.0px;height:330.4px;background:#f8e8f6;"></div>
<div class="b" style="left:632.7px;top:269.6px;width:1.0px;height:330.4px;background:#f8e8f6;"></div>
<div class="b" style="left:730.7px;top:269.6px;width:1.0px;height:330.4px;background:#f8e8f6;"></div>
<div class="b" style="left:505.0px;top:239.0px;width:257.5px;height:29.7px;background:linear-gradient(180deg,#d57ccf 0%,#c662bf 30%,#a83fa1 65%,#85277f 100%);"></div>
<div class="b" style="left:560.1px;top:239.0px;width:1.2px;height:29.7px;background:#e0a8dc;"></div>
<div class="b" style="left:610.7px;top:239.0px;width:1.2px;height:29.7px;background:#e0a8dc;"></div>
<div class="b" style="left:662.1px;top:239.0px;width:1.2px;height:29.7px;background:#e0a8dc;"></div>
<div class="b" style="left:712.1px;top:239.0px;width:1.2px;height:29.7px;background:#e0a8dc;"></div>
<div class="b" style="left:505.0px;top:239.0px;width:55.7px;height:30.6px;"><span class="h hs" style="font-size:10px;line-height:33.4px;">Actual</span></div>
<div class="b" style="left:560.7px;top:239.0px;width:50.6px;height:30.6px;"><span class="h hs" style="font-size:10px;line-height:33.4px;">Target</span></div>
<div class="b" style="left:611.3px;top:239.0px;width:51.4px;height:30.6px;"><span class="h hs" style="font-size:10px;line-height:14.4px;padding-top:2.3px;">Target Vs<br>Actual</span></div>
<div class="b" style="left:662.7px;top:239.0px;width:50.0px;height:30.6px;"><span class="h hs" style="font-size:10px;line-height:33.4px;">PY</span></div>
<div class="b" style="left:712.7px;top:239.0px;width:49.8px;height:30.6px;"><span class="h hs" style="font-size:10px;line-height:14.4px;padding-top:2.3px;">Actual Vs<br>PY</span></div>
<div class="b" style="left:503.4px;top:237.6px;width:260.7px;height:362.4px;box-sizing:border-box;border-style:solid;border-color:#55305a;border-width:1.4px 1.6px 0 1.6px;"></div>
<div class="c" style="left:505.0px;top:269.6px;width:55.7px;"><span>3.0</span></div>
<div class="c" style="left:560.7px;top:269.6px;width:50.6px;"><span>2.6</span></div>
<div class="c" style="left:662.7px;top:269.6px;width:50.0px;"><span>2.3</span></div>
<svg class="b" style="left:618.5px;top:275.2px" width="8.3" height="8.3" viewBox="0 0 8 8"><path d="M1.2 6.2 V1.2 H6.2 M1.6 1.6 L7 7" fill="none" stroke="#e3222a" stroke-width="1.3"/></svg>
<div class="c" style="left:635.5px;top:269.6px;width:26.5px;justify-content:flex-start;"><span style="transform-origin:0 50%">114%</span></div>
<svg class="b" style="left:718.1px;top:275.2px" width="8.3" height="8.3" viewBox="0 0 8 8"><path d="M1.2 6.2 V1.2 H6.2 M1.6 1.6 L7 7" fill="none" stroke="#e3222a" stroke-width="1.9"/></svg>
<div class="c" style="left:733.2px;top:269.6px;width:29.8px;justify-content:flex-start;"><span style="transform-origin:0 50%">129%</span></div>
<div class="c" style="left:505.0px;top:288.8px;width:55.7px;"><span>5.0</span></div>
<div class="c" style="left:560.7px;top:288.8px;width:50.6px;"><span>4.5</span></div>
<div class="c" style="left:662.7px;top:288.8px;width:50.0px;"><span>4.2</span></div>
<svg class="b" style="left:618.5px;top:294.4px" width="8.3" height="8.3" viewBox="0 0 8 8"><path d="M1.2 6.2 V1.2 H6.2 M1.6 1.6 L7 7" fill="none" stroke="#e3222a" stroke-width="1.3"/></svg>
<div class="c" style="left:635.5px;top:288.8px;width:26.5px;justify-content:flex-start;"><span style="transform-origin:0 50%">112%</span></div>
<svg class="b" style="left:718.1px;top:294.4px" width="8.3" height="8.3" viewBox="0 0 8 8"><path d="M1.2 6.2 V1.2 H6.2 M1.6 1.6 L7 7" fill="none" stroke="#e3222a" stroke-width="1.9"/></svg>
<div class="c" style="left:733.2px;top:288.8px;width:29.8px;justify-content:flex-start;"><span style="transform-origin:0 50%">120%</span></div>
<div class="c" style="left:505.0px;top:307.9px;width:55.7px;"><span>6.0</span></div>
<div class="c" style="left:560.7px;top:307.9px;width:50.6px;"><span>4.5</span></div>
<div class="c" style="left:662.7px;top:307.9px;width:50.0px;"><span>3.5</span></div>
<svg class="b" style="left:618.5px;top:313.5px" width="8.3" height="8.3" viewBox="0 0 8 8"><path d="M1.2 6.2 V1.2 H6.2 M1.6 1.6 L7 7" fill="none" stroke="#5dab45" stroke-width="1.3"/></svg>
<div class="c" style="left:635.5px;top:307.9px;width:26.5px;justify-content:flex-start;"><span style="transform-origin:0 50%">133%</span></div>
<svg class="b" style="left:718.1px;top:313.5px" width="8.3" height="8.3" viewBox="0 0 8 8"><path d="M1.2 6.2 V1.2 H6.2 M1.6 1.6 L7 7" fill="none" stroke="#5dab45" stroke-width="1.9"/></svg>
<div class="c" style="left:733.2px;top:307.9px;width:29.8px;justify-content:flex-start;"><span style="transform-origin:0 50%">173%</span></div>
<div class="c" style="left:505.0px;top:327.1px;width:55.7px;"><span>5.0</span></div>
<div class="c" style="left:560.7px;top:327.1px;width:50.6px;"><span>3.8</span></div>
<div class="c" style="left:662.7px;top:327.1px;width:50.0px;"><span>3.6</span></div>
<svg class="b" style="left:618.5px;top:332.7px" width="8.3" height="8.3" viewBox="0 0 8 8"><path d="M1.2 6.2 V1.2 H6.2 M1.6 1.6 L7 7" fill="none" stroke="#e3222a" stroke-width="1.3"/></svg>
<div class="c" style="left:635.5px;top:327.1px;width:26.5px;justify-content:flex-start;"><span style="transform-origin:0 50%">132%</span></div>
<svg class="b" style="left:718.1px;top:332.7px" width="8.3" height="8.3" viewBox="0 0 8 8"><path d="M1.2 6.2 V1.2 H6.2 M1.6 1.6 L7 7" fill="none" stroke="#e3222a" stroke-width="1.9"/></svg>
<div class="c" style="left:733.2px;top:327.1px;width:29.8px;justify-content:flex-start;"><span style="transform-origin:0 50%">140%</span></div>
<div class="c" style="left:505.0px;top:346.2px;width:55.7px;"><span>1.0</span></div>
<div class="c" style="left:560.7px;top:346.2px;width:50.6px;"><span>0.8</span></div>
<div class="c" style="left:662.7px;top:346.2px;width:50.0px;"><span>0.9</span></div>
<svg class="b" style="left:618.5px;top:351.8px" width="8.3" height="8.3" viewBox="0 0 8 8"><path d="M1.2 6.2 V1.2 H6.2 M1.6 1.6 L7 7" fill="none" stroke="#e3222a" stroke-width="1.3"/></svg>
<div class="c" style="left:635.5px;top:346.2px;width:26.5px;justify-content:flex-start;"><span style="transform-origin:0 50%">133%</span></div>
<svg class="b" style="left:718.1px;top:351.8px" width="8.3" height="8.3" viewBox="0 0 8 8"><path d="M1.2 6.2 V1.2 H6.2 M1.6 1.6 L7 7" fill="none" stroke="#e3222a" stroke-width="1.9"/></svg>
<div class="c" style="left:733.2px;top:346.2px;width:29.8px;justify-content:flex-start;"><span style="transform-origin:0 50%">109%</span></div>
<div class="c" style="left:505.0px;top:365.4px;width:55.7px;"><span>98.0</span></div>
<div class="c" style="left:560.7px;top:365.4px;width:50.6px;"><span>120.5</span></div>
<div class="c" style="left:662.7px;top:365.4px;width:50.0px;"><span>104.9</span></div>
<svg class="b" style="left:618.5px;top:371.0px" width="8.3" height="8.3" viewBox="0 0 8 8"><path d="M1.2 6.2 V1.2 H6.2 M1.6 1.6 L7 7" fill="none" stroke="#e3222a" stroke-width="1.3" transform="rotate(180 4 4)"/></svg>
<div class="c" style="left:635.5px;top:365.4px;width:26.5px;justify-content:flex-start;"><span style="transform-origin:0 50%">81%</span></div>
<svg class="b" style="left:718.1px;top:371.0px" width="8.3" height="8.3" viewBox="0 0 8 8"><path d="M1.2 6.2 V1.2 H6.2 M1.6 1.6 L7 7" fill="none" stroke="#e3222a" stroke-width="1.9" transform="rotate(180 4 4)"/></svg>
<div class="c" style="left:733.2px;top:365.4px;width:29.8px;justify-content:flex-start;"><span style="transform-origin:0 50%">93%</span></div>
<div class="c" style="left:505.0px;top:384.5px;width:55.7px;"><span>9.0</span></div>
<div class="c" style="left:560.7px;top:384.5px;width:50.6px;"><span>8.3</span></div>
<div class="c" style="left:662.7px;top:384.5px;width:50.0px;"><span>6.7</span></div>
<svg class="b" style="left:618.5px;top:390.1px" width="8.3" height="8.3" viewBox="0 0 8 8"><path d="M1.2 6.2 V1.2 H6.2 M1.6 1.6 L7 7" fill="none" stroke="#e3222a" stroke-width="1.3"/></svg>
<div class="c" style="left:635.5px;top:384.5px;width:26.5px;justify-content:flex-start;"><span style="transform-origin:0 50%">109%</span></div>
<svg class="b" style="left:718.1px;top:390.1px" width="8.3" height="8.3" viewBox="0 0 8 8"><path d="M1.2 6.2 V1.2 H6.2 M1.6 1.6 L7 7" fill="none" stroke="#e3222a" stroke-width="1.9"/></svg>
<div class="c" style="left:733.2px;top:384.5px;width:29.8px;justify-content:flex-start;"><span style="transform-origin:0 50%">134%</span></div>
<div class="c" style="left:505.0px;top:403.6px;width:55.7px;"><span>97.0</span></div>
<div class="c" style="left:560.7px;top:403.6px;width:50.6px;"><span>105.7</span></div>
<div class="c" style="left:662.7px;top:403.6px;width:50.0px;"><span>92.0</span></div>
<svg class="b" style="left:618.5px;top:409.3px" width="8.3" height="8.3" viewBox="0 0 8 8"><path d="M1.2 6.2 V1.2 H6.2 M1.6 1.6 L7 7" fill="none" stroke="#5dab45" stroke-width="1.3" transform="rotate(180 4 4)"/></svg>
<div class="c" style="left:635.5px;top:403.6px;width:26.5px;justify-content:flex-start;"><span style="transform-origin:0 50%">92%</span></div>
<svg class="b" style="left:718.1px;top:409.3px" width="8.3" height="8.3" viewBox="0 0 8 8"><path d="M1.2 6.2 V1.2 H6.2 M1.6 1.6 L7 7" fill="none" stroke="#e3222a" stroke-width="1.9"/></svg>
<div class="c" style="left:733.2px;top:403.6px;width:29.8px;justify-content:flex-start;"><span style="transform-origin:0 50%">105%</span></div>
<div class="c" style="left:505.0px;top:422.8px;width:55.7px;"><span>5.0</span></div>
<div class="c" style="left:560.7px;top:422.8px;width:50.6px;"><span>4.7</span></div>
<div class="c" style="left:662.7px;top:422.8px;width:50.0px;"><span>5.5</span></div>
<svg class="b" style="left:618.5px;top:428.4px" width="8.3" height="8.3" viewBox="0 0 8 8"><path d="M1.2 6.2 V1.2 H6.2 M1.6 1.6 L7 7" fill="none" stroke="#5dab45" stroke-width="1.3"/></svg>
<div class="c" style="left:635.5px;top:422.8px;width:26.5px;justify-content:flex-start;"><span style="transform-origin:0 50%">108%</span></div>
<svg class="b" style="left:718.1px;top:428.4px" width="8.3" height="8.3" viewBox="0 0 8 8"><path d="M1.2 6.2 V1.2 H6.2 M1.6 1.6 L7 7" fill="none" stroke="#e3222a" stroke-width="1.9" transform="rotate(180 4 4)"/></svg>
<div class="c" style="left:733.2px;top:422.8px;width:29.8px;justify-content:flex-start;"><span style="transform-origin:0 50%">91%</span></div>
<div class="c" style="left:505.0px;top:442.0px;width:55.7px;"><span>38.0</span></div>
<div class="c" style="left:560.7px;top:442.0px;width:50.6px;"><span>42.6</span></div>
<div class="c" style="left:662.7px;top:442.0px;width:50.0px;"><span>40.9</span></div>
<svg class="b" style="left:618.5px;top:447.6px" width="8.3" height="8.3" viewBox="0 0 8 8"><path d="M1.2 6.2 V1.2 H6.2 M1.6 1.6 L7 7" fill="none" stroke="#e3222a" stroke-width="1.3" transform="rotate(180 4 4)"/></svg>
<div class="c" style="left:635.5px;top:442.0px;width:26.5px;justify-content:flex-start;"><span style="transform-origin:0 50%">89%</span></div>
<svg class="b" style="left:718.1px;top:447.6px" width="8.3" height="8.3" viewBox="0 0 8 8"><path d="M1.2 6.2 V1.2 H6.2 M1.6 1.6 L7 7" fill="none" stroke="#e3222a" stroke-width="1.9" transform="rotate(180 4 4)"/></svg>
<div class="c" style="left:733.2px;top:442.0px;width:29.8px;justify-content:flex-start;"><span style="transform-origin:0 50%">93%</span></div>
<div class="b" style="left:769.3px;top:214.8px;width:251.0px;height:18.3px;background:linear-gradient(180deg,#3c7d2a 0%,#2f6a20 50%,#265a19 100%);"><span class="h hs" style="font-size:10.6px;line-height:19.3px;">YTD</span></div>
<div class="b" style="left:769.6px;top:239.0px;width:249.4px;height:361.0px;background:#fff;"></div>
<div class="b" style="left:769.6px;top:288.2px;width:249.4px;height:1.0px;background:#d9efd3;"></div>
<div class="b" style="left:769.6px;top:307.4px;width:249.4px;height:1.0px;background:#d9efd3;"></div>
<div class="b" style="left:769.6px;top:326.6px;width:249.4px;height:1.0px;background:#d9efd3;"></div>
<div class="b" style="left:769.6px;top:345.7px;width:249.4px;height:1.0px;background:#d9efd3;"></div>
<div class="b" style="left:769.6px;top:364.9px;width:249.4px;height:1.0px;background:#d9efd3;"></div>
<div class="b" style="left:769.6px;top:384.0px;width:249.4px;height:1.0px;background:#d9efd3;"></div>
<div class="b" style="left:769.6px;top:403.1px;width:249.4px;height:1.0px;background:#d9efd3;"></div>
<div class="b" style="left:769.6px;top:422.3px;width:249.4px;height:1.0px;background:#d9efd3;"></div>
<div class="b" style="left:769.6px;top:441.5px;width:249.4px;height:1.0px;background:#d9efd3;"></div>
<div class="b" style="left:769.6px;top:460.6px;width:249.4px;height:1.0px;background:#d9efd3;"></div>
<div class="b" style="left:769.6px;top:479.8px;width:249.4px;height:1.0px;background:#d9efd3;"></div>
<div class="b" style="left:769.6px;top:498.9px;width:249.4px;height:1.0px;background:#d9efd3;"></div>
<div class="b" style="left:769.6px;top:518.0px;width:249.4px;height:1.0px;background:#d9efd3;"></div>
<div class="b" style="left:769.6px;top:537.2px;width:249.4px;height:1.0px;background:#d9efd3;"></div>
<div class="b" style="left:769.6px;top:556.4px;width:249.4px;height:1.0px;background:#d9efd3;"></div>
<div class="b" style="left:769.6px;top:575.5px;width:249.4px;height:1.0px;background:#d9efd3;"></div>
<div class="b" style="left:769.6px;top:594.6px;width:249.4px;height:1.0px;background:#d9efd3;"></div>
<div class="b" style="left:819.1px;top:269.6px;width:1.0px;height:330.4px;background:#d9efd3;"></div>
<div class="b" style="left:869.4px;top:269.6px;width:1.0px;height:330.4px;background:#d9efd3;"></div>
<div class="b" style="left:920.2px;top:269.6px;width:1.0px;height:330.4px;background:#d9efd3;"></div>
<div class="b" style="left:970.5px;top:269.6px;width:1.0px;height:330.4px;background:#d9efd3;"></div>
<div class="b" style="left:890.1px;top:269.6px;width:1.0px;height:330.4px;background:#d9efd3;"></div>
<div class="b" style="left:987.8px;top:269.6px;width:1.0px;height:330.4px;background:#d9efd3;"></div>
<div class="b" style="left:769.6px;top:239.0px;width:249.4px;height:29.7px;background:linear-gradient(180deg,#205a15 0%,#25631a 35%,#2f7422 70%,#3a852b 100%);"></div>
<div class="b" style="left:819.0px;top:239.0px;width:1.2px;height:29.7px;background:#b7e6a4;"></div>
<div class="b" style="left:869.3px;top:239.0px;width:1.2px;height:29.7px;background:#b7e6a4;"></div>
<div class="b" style="left:920.1px;top:239.0px;width:1.2px;height:29.7px;background:#b7e6a4;"></div>
<div class="b" style="left:970.4px;top:239.0px;width:1.2px;height:29.7px;background:#b7e6a4;"></div>
<div class="b" style="left:769.6px;top:239.0px;width:50.0px;height:30.6px;"><span class="h hs" style="font-size:10px;line-height:33.4px;">Actual</span></div>
<div class="b" style="left:819.6px;top:239.0px;width:50.3px;height:30.6px;"><span class="h hs" style="font-size:10px;line-height:33.4px;">Target</span></div>
<div class="b" style="left:869.9px;top:239.0px;width:50.8px;height:30.6px;"><span class="h hs" style="font-size:10px;line-height:14.4px;padding-top:2.3px;">Actual Vs<br>Target</span></div>
<div class="b" style="left:920.7px;top:239.0px;width:50.3px;height:30.6px;"><span class="h hs" style="font-size:10px;line-height:33.4px;">PY</span></div>
<div class="b" style="left:971.0px;top:239.0px;width:48.0px;height:30.6px;"><span class="h hs" style="font-size:10px;line-height:14.4px;padding-top:2.3px;">PY Vs<br>Actual</span></div>
<div class="b" style="left:767.9px;top:238.0px;width:252.5px;height:362.0px;box-sizing:border-box;border-style:solid;border-color:#2f6d22;border-width:1.0px 1.4px 0 1.7px;"></div>
<div class="c" style="left:769.6px;top:269.6px;width:50.0px;"><span>19.0</span></div>
<div class="c" style="left:819.6px;top:269.6px;width:50.3px;"><span>16.5</span></div>
<div class="c" style="left:920.7px;top:269.6px;width:50.3px;"><span>14.7</span></div>
<svg class="b" style="left:876.8px;top:275.2px" width="8.3" height="8.3" viewBox="0 0 8 8"><path d="M1.2 6.2 V1.2 H6.2 M1.6 1.6 L7 7" fill="none" stroke="#e3222a" stroke-width="1.8"/></svg>
<div class="c" style="left:892.0px;top:269.6px;width:28.0px;justify-content:flex-start;"><span style="transform-origin:0 50%">115%</span></div>
<svg class="b" style="left:976.2px;top:275.2px" width="8.3" height="8.3" viewBox="0 0 8 8"><path d="M1.2 6.2 V1.2 H6.2 M1.6 1.6 L7 7" fill="none" stroke="#e3222a" stroke-width="1.8"/></svg>
<div class="c" style="left:991.0px;top:269.6px;width:29.0px;"><span>129%</span></div>
<div class="c" style="left:769.6px;top:288.8px;width:50.0px;"><span>43.0</span></div>
<div class="c" style="left:819.6px;top:288.8px;width:50.3px;"><span>37.4</span></div>
<div class="c" style="left:920.7px;top:288.8px;width:50.3px;"><span>46.4</span></div>
<svg class="b" style="left:876.8px;top:294.4px" width="8.3" height="8.3" viewBox="0 0 8 8"><path d="M1.2 6.2 V1.2 H6.2 M1.6 1.6 L7 7" fill="none" stroke="#e3222a" stroke-width="1.8"/></svg>
<div class="c" style="left:892.0px;top:288.8px;width:28.0px;justify-content:flex-start;"><span style="transform-origin:0 50%">115%</span></div>
<svg class="b" style="left:976.2px;top:294.4px" width="8.3" height="8.3" viewBox="0 0 8 8"><path d="M1.2 6.2 V1.2 H6.2 M1.6 1.6 L7 7" fill="none" stroke="#5dab45" stroke-width="1.8" transform="rotate(180 4 4)"/></svg>
<div class="c" style="left:991.0px;top:288.8px;width:29.0px;"><span>93%</span></div>
<div class="c" style="left:769.6px;top:307.9px;width:50.0px;"><span>42.0</span></div>
<div class="c" style="left:819.6px;top:307.9px;width:50.3px;"><span>39.1</span></div>
<div class="c" style="left:920.7px;top:307.9px;width:50.3px;"><span>46.1</span></div>
<svg class="b" style="left:876.8px;top:313.5px" width="8.3" height="8.3" viewBox="0 0 8 8"><path d="M1.2 6.2 V1.2 H6.2 M1.6 1.6 L7 7" fill="none" stroke="#5dab45" stroke-width="1.8"/></svg>
<div class="c" style="left:892.0px;top:307.9px;width:28.0px;justify-content:flex-start;"><span style="transform-origin:0 50%">108%</span></div>
<svg class="b" style="left:976.2px;top:313.5px" width="8.3" height="8.3" viewBox="0 0 8 8"><path d="M1.2 6.2 V1.2 H6.2 M1.6 1.6 L7 7" fill="none" stroke="#e3222a" stroke-width="1.8" transform="rotate(180 4 4)"/></svg>
<div class="c" style="left:991.0px;top:307.9px;width:29.0px;"><span>91%</span></div>
<div class="c" style="left:769.6px;top:327.1px;width:50.0px;"><span>65.0</span></div>
<div class="c" style="left:819.6px;top:327.1px;width:50.3px;"><span>78.7</span></div>
<div class="c" style="left:920.7px;top:327.1px;width:50.3px;"><span>89.7</span></div>
<svg class="b" style="left:876.8px;top:332.7px" width="8.3" height="8.3" viewBox="0 0 8 8"><path d="M1.2 6.2 V1.2 H6.2 M1.6 1.6 L7 7" fill="none" stroke="#5dab45" stroke-width="1.8" transform="rotate(180 4 4)"/></svg>
<div class="c" style="left:892.0px;top:327.1px;width:28.0px;justify-content:flex-start;"><span style="transform-origin:0 50%">83%</span></div>
<svg class="b" style="left:976.2px;top:332.7px" width="8.3" height="8.3" viewBox="0 0 8 8"><path d="M1.2 6.2 V1.2 H6.2 M1.6 1.6 L7 7" fill="none" stroke="#5dab45" stroke-width="1.8" transform="rotate(180 4 4)"/></svg>
<div class="c" style="left:991.0px;top:327.1px;width:29.0px;"><span>72%</span></div>
<div class="c" style="left:769.6px;top:346.2px;width:50.0px;"><span>10.0</span></div>
<div class="c" style="left:819.6px;top:346.2px;width:50.3px;"><span>10.8</span></div>
<div class="c" style="left:920.7px;top:346.2px;width:50.3px;"><span>12.2</span></div>
<svg class="b" style="left:876.8px;top:351.8px" width="8.3" height="8.3" viewBox="0 0 8 8"><path d="M1.2 6.2 V1.2 H6.2 M1.6 1.6 L7 7" fill="none" stroke="#5dab45" stroke-width="1.8" transform="rotate(180 4 4)"/></svg>
<div class="c" style="left:892.0px;top:346.2px;width:28.0px;justify-content:flex-start;"><span style="transform-origin:0 50%">93%</span></div>
<svg class="b" style="left:976.2px;top:351.8px" width="8.3" height="8.3" viewBox="0 0 8 8"><path d="M1.2 6.2 V1.2 H6.2 M1.6 1.6 L7 7" fill="none" stroke="#5dab45" stroke-width="1.8" transform="rotate(180 4 4)"/></svg>
<div class="c" style="left:991.0px;top:346.2px;width:29.0px;"><span>82%</span></div>
<div class="c" style="left:769.6px;top:365.4px;width:50.0px;"><span>971.0</span></div>
<div class="c" style="left:819.6px;top:365.4px;width:50.3px;"><span>912.7</span></div>
<div class="c" style="left:920.7px;top:365.4px;width:50.3px;"><span>785.0</span></div>
<svg class="b" style="left:876.8px;top:371.0px" width="8.3" height="8.3" viewBox="0 0 8 8"><path d="M1.2 6.2 V1.2 H6.2 M1.6 1.6 L7 7" fill="none" stroke="#5dab45" stroke-width="1.8"/></svg>
<div class="c" style="left:892.0px;top:365.4px;width:28.0px;justify-content:flex-start;"><span style="transform-origin:0 50%">106%</span></div>
<svg class="b" style="left:976.2px;top:371.0px" width="8.3" height="8.3" viewBox="0 0 8 8"><path d="M1.2 6.2 V1.2 H6.2 M1.6 1.6 L7 7" fill="none" stroke="#5dab45" stroke-width="1.8"/></svg>
<div class="c" style="left:991.0px;top:365.4px;width:29.0px;"><span>124%</span></div>
<div class="c" style="left:769.6px;top:384.5px;width:50.0px;"><span>83.0</span></div>
<div class="c" style="left:819.6px;top:384.5px;width:50.3px;"><span>97.1</span></div>
<div class="c" style="left:920.7px;top:384.5px;width:50.3px;"><span>118.5</span></div>
<svg class="b" style="left:876.8px;top:390.1px" width="8.3" height="8.3" viewBox="0 0 8 8"><path d="M1.2 6.2 V1.2 H6.2 M1.6 1.6 L7 7" fill="none" stroke="#5dab45" stroke-width="1.8" transform="rotate(180 4 4)"/></svg>
<div class="c" style="left:892.0px;top:384.5px;width:28.0px;justify-content:flex-start;"><span style="transform-origin:0 50%">85%</span></div>
<svg class="b" style="left:976.2px;top:390.1px" width="8.3" height="8.3" viewBox="0 0 8 8"><path d="M1.2 6.2 V1.2 H6.2 M1.6 1.6 L7 7" fill="none" stroke="#5dab45" stroke-width="1.8" transform="rotate(180 4 4)"/></svg>
<div class="c" style="left:991.0px;top:384.5px;width:29.0px;"><span>70%</span></div>
<div class="c" style="left:769.6px;top:403.6px;width:50.0px;"><span>972.0</span></div>
<div class="c" style="left:819.6px;top:403.6px;width:50.3px;"><span>952.6</span></div>
<div class="c" style="left:920.7px;top:403.6px;width:50.3px;"><span>924.0</span></div>
<svg class="b" style="left:876.8px;top:409.3px" width="8.3" height="8.3" viewBox="0 0 8 8"><path d="M1.2 6.2 V1.2 H6.2 M1.6 1.6 L7 7" fill="none" stroke="#e3222a" stroke-width="1.8"/></svg>
<div class="c" style="left:892.0px;top:403.6px;width:28.0px;justify-content:flex-start;"><span style="transform-origin:0 50%">102%</span></div>
<svg class="b" style="left:976.2px;top:409.3px" width="8.3" height="8.3" viewBox="0 0 8 8"><path d="M1.2 6.2 V1.2 H6.2 M1.6 1.6 L7 7" fill="none" stroke="#e3222a" stroke-width="1.8"/></svg>
<div class="c" style="left:991.0px;top:403.6px;width:29.0px;"><span>105%</span></div>
<div class="c" style="left:769.6px;top:422.8px;width:50.0px;"><span>49.0</span></div>
<div class="c" style="left:819.6px;top:422.8px;width:50.3px;"><span>38.2</span></div>
<div class="c" style="left:920.7px;top:422.8px;width:50.3px;"><span>44.7</span></div>
<svg class="b" style="left:876.8px;top:428.4px" width="8.3" height="8.3" viewBox="0 0 8 8"><path d="M1.2 6.2 V1.2 H6.2 M1.6 1.6 L7 7" fill="none" stroke="#5dab45" stroke-width="1.8"/></svg>
<div class="c" style="left:892.0px;top:422.8px;width:28.0px;justify-content:flex-start;"><span style="transform-origin:0 50%">128%</span></div>
<svg class="b" style="left:976.2px;top:428.4px" width="8.3" height="8.3" viewBox="0 0 8 8"><path d="M1.2 6.2 V1.2 H6.2 M1.6 1.6 L7 7" fill="none" stroke="#5dab45" stroke-width="1.8"/></svg>
<div class="c" style="left:991.0px;top:422.8px;width:29.0px;"><span>110%</span></div>
<div class="c" style="left:769.6px;top:442.0px;width:50.0px;"><span>331.0</span></div>
<div class="c" style="left:819.6px;top:442.0px;width:50.3px;"><span>327.7</span></div>
<div class="c" style="left:920.7px;top:442.0px;width:50.3px;"><span>324.4</span></div>
<svg class="b" style="left:876.8px;top:447.6px" width="8.3" height="8.3" viewBox="0 0 8 8"><path d="M1.2 6.2 V1.2 H6.2 M1.6 1.6 L7 7" fill="none" stroke="#5dab45" stroke-width="1.8"/></svg>
<div class="c" style="left:892.0px;top:442.0px;width:28.0px;justify-content:flex-start;"><span style="transform-origin:0 50%">101%</span></div>
<svg class="b" style="left:976.2px;top:447.6px" width="8.3" height="8.3" viewBox="0 0 8 8"><path d="M1.2 6.2 V1.2 H6.2 M1.6 1.6 L7 7" fill="none" stroke="#5dab45" stroke-width="1.8"/></svg>
<div class="c" style="left:991.0px;top:442.0px;width:29.0px;"><span>102%</span></div>
</div></body></html>
